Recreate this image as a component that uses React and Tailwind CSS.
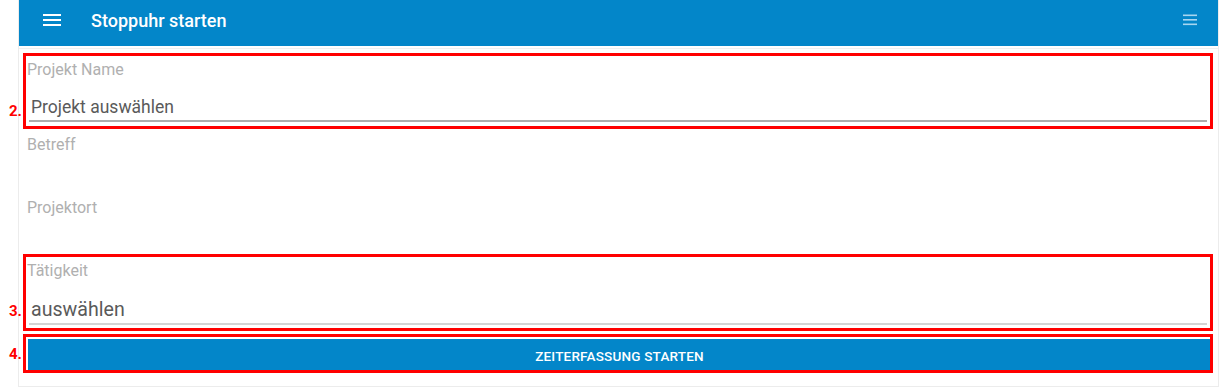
// Stoppuhr starten — time tracking start form with annotation overlays
const Label = ({ className, children }) => (
    <div className={`pl-[8px] text-[16px] leading-[18px] text-[#b0b0b0] ${className}`}>{children}</div>
)

const Box = ({ className }) => (
    <div className={`absolute border-[3px] border-[#ff0000] pointer-events-none ${className}`} />
)

const Tag = ({ className, children }) => (
    <div className={`absolute text-[15px] leading-[16px] font-bold text-[#ff0000] ${className}`}>
        {children}
    </div>
)

export default function App() {
    return (
        <div className="relative w-[1220px] h-[388px] bg-white overflow-hidden" style={{ fontFamily: 'Roboto, "Liberation Sans", sans-serif' }}>
            {/* ── Panel ── */}
            <div className="ml-[18px] w-[1201px] h-[387px] border-x border-b border-[#ececec] flex flex-col">
                {/* Header */}
                <header className="h-[46px] pb-[6px] bg-[#0386c9] flex items-center shrink-0">
                    <svg className="ml-[21px] w-[24px] h-[24px]" viewBox="0 0 24 24" fill="#ffffff">
                        <rect x="3" y="6" width="18" height="2" />
                        <rect x="3" y="11" width="18" height="2" />
                        <rect x="3" y="16" width="18" height="2" />
                    </svg>
                    <span className="ml-[27px] text-[18px] font-medium text-white">Stoppuhr starten</span>
                    <svg className="ml-auto mr-[21px] w-[14px] h-[12px]" viewBox="0 0 14 12" fill="#a8d6f0">
                        <rect x="0" y="0.5" width="14" height="1.6" />
                        <rect x="0" y="5" width="14" height="1.6" />
                        <rect x="0" y="9.5" width="14" height="1.6" />
                    </svg>
                </header>
                <div className="h-[3px] border-b border-[#f0f0f0]" />

                {/* Form */}
                <div className="flex flex-col">
                    <div className="mt-[12px]">
                        <Label>Projekt Name</Label>
                        <div className="mt-[17px] ml-[10px] mr-[11px] pl-[2px] pb-[2px] border-b-2 border-[#acacac] text-[17.5px] leading-[22px] text-[#5a5a5a]">
                            Projekt auswählen
                        </div>
                    </div>
                    <Label className="mt-[14px]">Betreff</Label>
                    <Label className="mt-[45px]">Projektort</Label>
                    <div className="mt-[45px]">
                        <Label>Tätigkeit</Label>
                        <div className="mt-[18px] ml-[10px] mr-[11px] pl-[2px] pb-[1px] border-b-2 border-[#d4d4d4] text-[19.6px] leading-[24px] text-[#5a5a5a]">
                            auswählen
                        </div>
                    </div>
                    <button className="mt-[14px] ml-[9px] mr-[7px] h-[34px] bg-[#0386c9] text-white text-[13.5px] font-medium tracking-[0.2px]">
                        ZEITERFASSUNG STARTEN
                    </button>
                </div>
            </div>

            {/* ── Annotation overlays ── */}
            <Box className="left-[23px] top-[53px] w-[1190px] h-[76px]" />
            <Box className="left-[23px] top-[254px] w-[1190px] h-[77px]" />
            <Box className="left-[23px] top-[334px] w-[1190px] h-[39px]" />
            <Tag className="left-[9px] top-[103px]">2.</Tag>
            <Tag className="left-[9px] top-[303px]">3.</Tag>
            <Tag className="left-[9px] top-[346px]">4.</Tag>
        </div>
    )
}
